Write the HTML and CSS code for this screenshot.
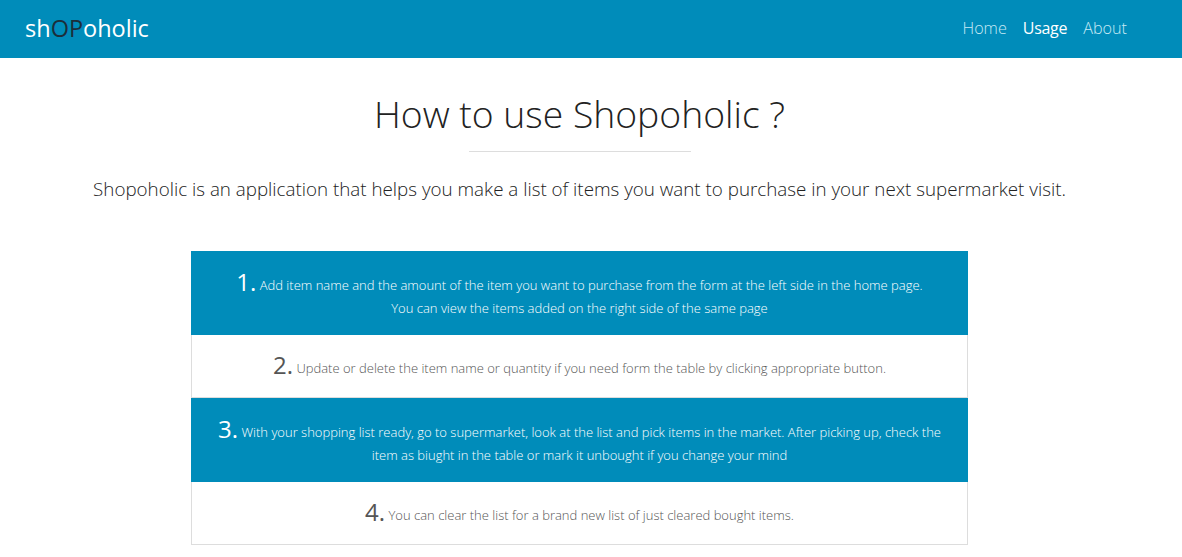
FILE: index.html
```html
<!DOCTYPE html>
<html>
<head>
<meta charset="utf-8">
<link rel="stylesheet" href="styles.css">
</head>
<body>
<header class="navbar">
  <div class="brand">sh<span class="op">OP</span>oholic</div>
  <nav class="links">
    <a class="link">Home</a>
    <a class="link active">Usage</a>
    <a class="link">About</a>
  </nav>
</header>
<main class="container">
  <h1 class="title">How to use Shopoholic ?</h1>
  <hr class="rule">
  <p class="lead">Shopoholic is an application that helps you make a list of items you want to purchase in your next supermarket visit.</p>
  <div class="steps">
    <div class="step blue"><p><span class="num">1.</span> Add item name and the amount of the item you want to purchase from the form at the left side in the home page.<br>You can view the items added on the right side of the same page</p></div>
    <div class="step white"><p><span class="num">2.</span> Update or delete the item name or quantity if you need form the table by clicking appropriate button.</p></div>
    <div class="step blue"><p><span class="num">3.</span> With your shopping list ready, go to supermarket, look at the list and pick items in the market. After picking up, check the item as biught in the table or mark it unbought if you change your mind</p></div>
    <div class="step white"><p><span class="num">4.</span> You can clear the list for a brand new list of just cleared bought items.</p></div>
  </div>
</main>
</body>
</html>
```
FILE: styles.css
```css
* { box-sizing: border-box; }
html, body { margin: 0; padding: 0; }
body {
  font-family: "Open Sans", "DejaVu Sans", sans-serif;
  font-weight: 300;
  background: #fff;
  color: #222;
}
.navbar {
  height: 58px;
  background: #008cba;
  display: flex;
  align-items: center;
  justify-content: space-between;
  padding: 0 55px 0 25px;
}
.brand {
  font-size: 23.5px;
  color: #fff;
  font-weight: 400;
  margin-top: -3px;
}
.brand .op { color: #1c2e3a; }
.links { display: flex; gap: 16px; margin-top: -2px; }
.link {
  font-size: 16.2px;
  color: #c7eaf5;
  font-weight: 300;
  text-decoration: none;
}
.link.active { color: #fff; font-weight: 400; font-size: 16px; letter-spacing: -0.3px; }
.container {
  width: 1159px;
  display: flex;
  flex-direction: column;
  align-items: center;
}
.title {
  margin: 28px 0 0;
  font-size: 37.3px;
  font-weight: 300;
  line-height: 56px;
  color: #222;
}
.rule {
  width: 222px;
  border: 0;
  border-top: 1px solid #ddd;
  margin: 9px 0 0;
}
.lead {
  margin: 24px 0 0;
  font-size: 18.8px;
  font-weight: 300;
  line-height: 26px;
  color: #222;
}
.steps {
  width: 777px;
  margin-top: 49px;
  display: flex;
  flex-direction: column;
}
.step {
  display: flex;
  align-items: center;
  justify-content: center;
  text-align: center;
  padding: 0 20px;
}
.step p { margin: 0; font-size: 13px; line-height: 23px; font-weight: 300; }
.step.blue { background: #008cba; color: #fff; height: 84px; }
.step.blue p { padding-top: 3px; }
.step.white {
  background: #fff;
  color: #555;
  height: 63px;
  border: 1px solid #ddd;
  border-top: 0;
}
.num { font-size: 24px; vertical-align: -1px; font-weight: 400; }
.step.white .num { color: #555; }
```
